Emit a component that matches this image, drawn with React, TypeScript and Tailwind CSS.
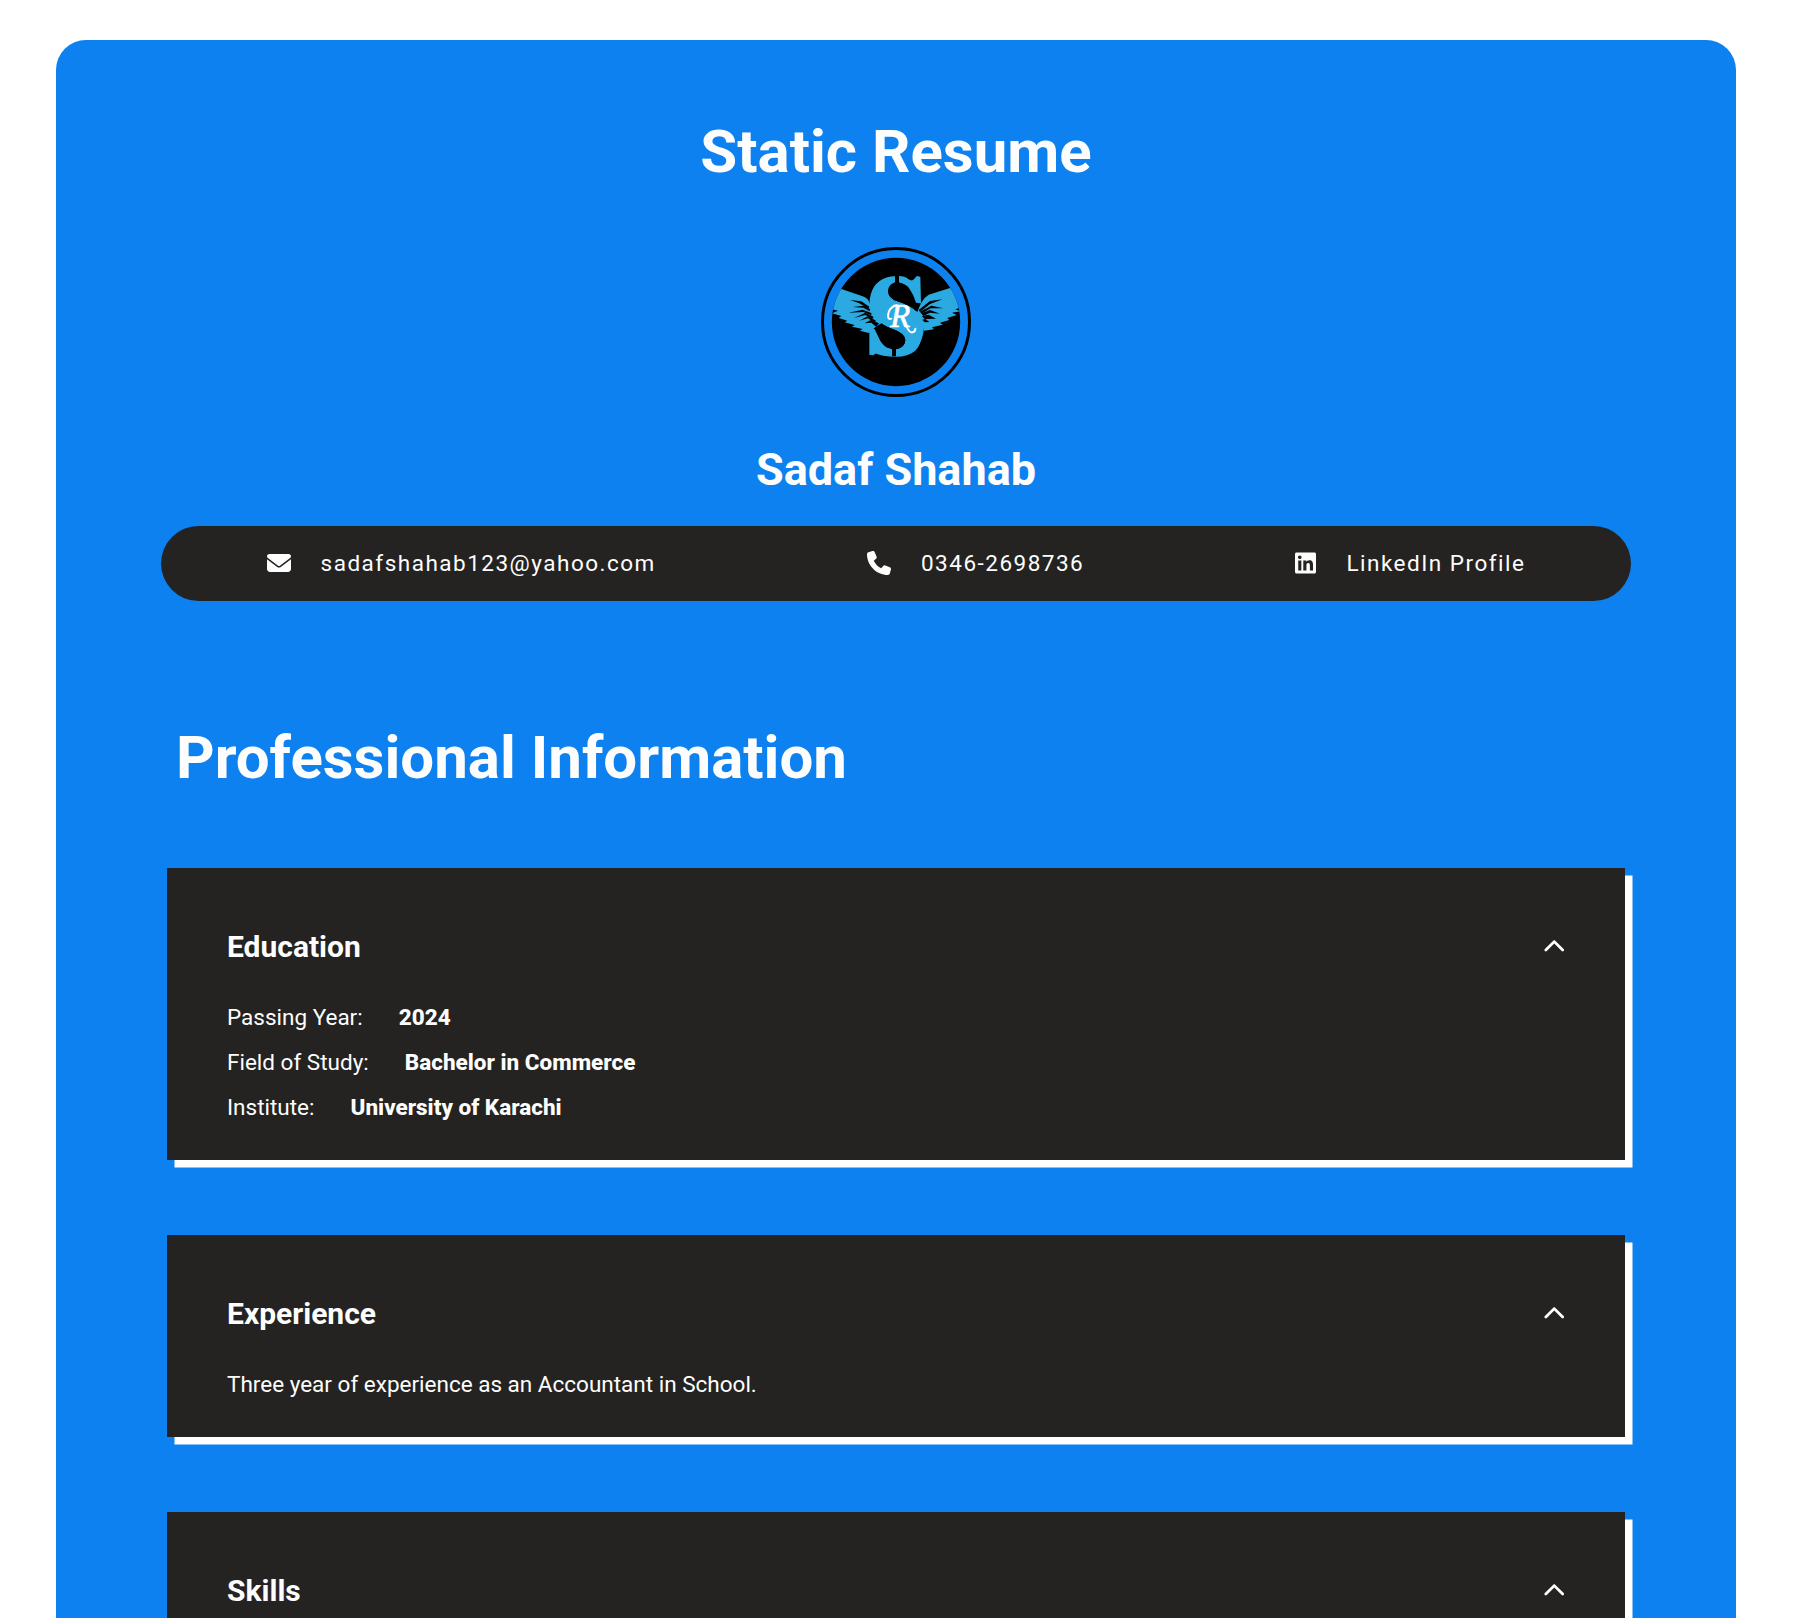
import type { ReactNode } from "react";
import { FaChevronUp, FaEnvelope, FaLinkedin, FaPhone } from "react-icons/fa6";

const BLUE = "#2ba9e1";

function Logo() {
  return (
    <svg viewBox="33 33 450 450" className="block size-[150px]" aria-label="SR logo">
      <defs>
        <clipPath id="disc">
          <circle cx="258" cy="258" r="192.5" />
        </clipPath>
      </defs>
      <circle cx="258" cy="258" r="220.5" fill="none" stroke="#000" strokeWidth="9" />
      <circle cx="258" cy="258" r="192.5" fill="#000" />
      <g clipPath="url(#disc)">
        <text
          x="173"
          y="356"
          textLength="173"
          lengthAdjust="spacingAndGlyphs"
          fontFamily="'Liberation Serif', serif"
          fontWeight="700"
          fontSize="336"
          fill={BLUE}
          stroke={BLUE}
          strokeWidth="5"
        >
          S
        </text>
        {/* left wing */}
        <path
          fill={BLUE}
          d="M60 150 L94 159 L156 180 Q176 186 180 205 L215 262 L200 270 L176 291 L150 284 L158 279 L126 272 L134 267 L104 259 L112 254 L86 246 L94 240 L66 232 L84 224 L60 218Z"
        />
        {/* right wing */}
        <path
          fill={BLUE}
          d="M460 146 L420 156 L356 176 Q342 184 334 200 L316 228 L335 262 L342 284 L372 280 L366 274 L398 266 L390 260 L418 252 L412 246 L440 237 L426 230 L452 226 L436 220 L460 212Z"
        />
        {/* broad spine joining the two bowls */}
        <path
          fill={BLUE}
          d="M178 205 Q180 140 232 124 Q250 119 256 121 L256 140 Q234 146 234 166 Q236 188 262 196 Q300 204 322 228 Q348 252 340 292 Q332 334 296 352 Q276 361 258 360 L258 340 Q286 334 286 312 Q284 292 250 280 Q216 268 196 246 Q178 228 178 205Z"
        />
        {/* gaps between feathers */}
        <g fill="#000">
          <path d="M120 192 L154 196 L178 212 L175 218 L148 202Z" />
          <path d="M128 213 L162 209 L180 219 L179 226 L160 215Z" />
          <path d="M116 230 L158 221 L184 231 L184 238 L160 228Z" />
          <path d="M132 246 L166 230 L190 242 L189 248 L166 237Z" />
          <path d="M148 254 L174 240 L198 254 L194 260 L174 247Z" />
          <path d="M164 262 L182 252 L207 262 L198 272 L184 260Z" />
          <path d="M398 190 L360 195 L326 222 L330 228 L360 204Z" />
          <path d="M400 217 L364 209 L330 227 L334 233 L362 217Z" />
          <path d="M390 233 L360 222 L334 232 L340 240 L360 230Z" />
          <path d="M378 248 L356 236 L336 240 L344 249Z" />
          <path d="M358 258 L346 249 L337 251 L344 259Z" />
        </g>
        {/* upper and lower counters */}
        <path
          fill="#000"
          d="M255 119 L267 119 L267 139 Q292 144 306 164 Q316 182 322 203 L332 203 L322 228 Q296 206 262 196 Q236 188 234 166 Q234 146 255 139Z"
        />
        <path
          fill="#000"
          d="M246 361 L258 361 L258 340 Q286 334 286 312 Q284 292 250 280 Q222 270 214 263 L194 280 L202 296 Q214 332 246 340Z"
        />
        <path
          fill={BLUE}
          d="M267 120 Q284 120 296 130 Q304 136 310 131 Q318 124 320 120 L331 122 L333 202 L318 200 Q310 174 297 156 Q286 142 267 138Z"
        />
        <path
          fill={BLUE}
          d="M246 360 Q228 358 216 350 Q206 344 198 352 L190 358 L178 356 L178 279 L194 279 Q204 310 220 326 Q230 337 246 339Z"
        />
        <text
          x="241"
          y="274"
          fontFamily="'Liberation Serif', serif"
          fontStyle="italic"
          fontSize="98"
          fill="#fff"
          stroke="#fff"
          strokeWidth="2"
        >
          R
        </text>
        <path
          d="M260 208 Q236 214 234 238 Q234 252 244 248 M284 258 Q296 292 308 289 Q316 287 316 278"
          fill="none"
          stroke="#fff"
          strokeWidth="6"
          strokeLinecap="round"
        />
      </g>
    </svg>
  );
}

function Contact({ icon, children }: { icon: ReactNode; children: ReactNode }) {
  return (
    <div className="flex items-center">
      {icon}
      <span className="ml-[30px] text-[22.5px] leading-[36px] tracking-[1.5px]">{children}</span>
    </div>
  );
}

function Card({ title, children }: { title: string; children: ReactNode }) {
  return (
    <section className="bg-[#242321] px-[60px] pt-16 pb-[30px] shadow-[7.5px_7.5px_0_#fff]">
      <div className="mb-[33px] flex h-[30px] items-center justify-between">
        <h3 className="text-[30px] leading-[30px] font-bold">{title}</h3>
        <FaChevronUp className="size-[22.5px]" />
      </div>
      <div className="text-[22.5px] leading-[45px]">{children}</div>
    </section>
  );
}

function Field({ label, value }: { label: string; value: string }) {
  return (
    <p className="flex">
      <span>{label}</span>
      <strong className="ml-[36px] font-extrabold">{value}</strong>
    </p>
  );
}

export default function App() {
  return (
    <div className="h-[1618px] overflow-hidden bg-white pt-10 pr-[68px] pl-14 font-['Roboto',sans-serif] text-[#fdfdfd]">
      <main className="h-[1700px] rounded-t-[30px] bg-[#0d81ef] px-[105px] pt-[82px]">
        <header className="flex flex-col items-center">
          <h1 className="text-[60px] leading-[60px] font-bold">Static Resume</h1>
          <div className="mt-[65px]">
            <Logo />
          </div>
          <h2 className="mt-[50px] text-[45px] leading-[45px] font-bold">Sadaf Shahab</h2>
          <div className="mt-[34px] flex h-[75px] w-full items-center justify-around rounded-[37.5px] bg-[#242321] pb-[2px]">
            <Contact icon={<FaEnvelope className="size-6" />}>sadafshahab123@yahoo.com</Contact>
            <Contact icon={<FaPhone className="size-6" />}>0346-2698736</Contact>
            <Contact icon={<FaLinkedin className="h-6 w-[21px]" />}>LinkedIn Profile</Contact>
          </div>
        </header>
        <h2 className="mt-[127px] ml-[15px] text-[60px] leading-[60px] font-bold">Professional Information</h2>
        <div className="mx-[6px] mt-20 flex flex-col gap-[75px]">
          <Card title="Education">
            <Field label="Passing Year:" value="2024" />
            <Field label="Field of Study:" value="Bachelor in Commerce" />
            <Field label="Institute:" value="University of Karachi" />
          </Card>
          <Card title="Experience">
            <p>Three year of experience as an Accountant in School.</p>
          </Card>
          <Card title="Skills">
            <p className="h-[45px]" />
          </Card>
        </div>
      </main>
    </div>
  );
}
